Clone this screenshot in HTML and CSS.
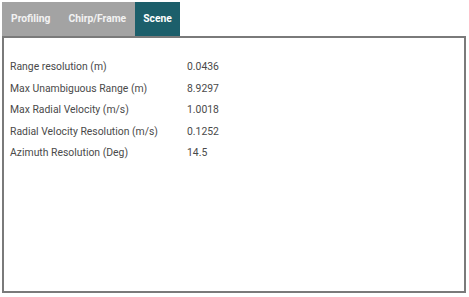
FILE: index.html
```html
<!DOCTYPE html>
<html lang="en">
<head>
    <meta charset="UTF-8">
    <title>Scene</title>
    <link rel="stylesheet" href="styles.css">
</head>
<body>

<div class="tabs">
    <div class="tab">Profiling</div>
    <div class="tab">Chirp/Frame</div>
    <div class="tab active">Scene</div>
</div>

<!-- Scene parameters -->
<div class="panel">
    <div class="row"><span class="label">Range resolution (m)</span><span class="value">0.0436</span></div>
    <div class="row"><span class="label">Max Unambiguous Range (m)</span><span class="value">8.9297</span></div>
    <div class="row"><span class="label">Max Radial Velocity (m/s)</span><span class="value">1.0018</span></div>
    <div class="row"><span class="label">Radial Velocity Resolution (m/s)</span><span class="value">0.1252</span></div>
    <div class="row"><span class="label">Azimuth Resolution (Deg)</span><span class="value">14.5</span></div>
</div>

</body>
</html>
```

FILE: styles.css
```css
body {
    font-family: Roboto, Arial, sans-serif;
    background-color: #fff;
    margin: 0;
    padding: 2px 3px 4px 2px;
}

.tabs {
    display: flex;
    height: 34px;
}

.tab {
    background-color: #a3a3a3;
    color: #f2f2f2;
    font-size: 10.3px;
    font-weight: bold;
    padding: 0 9px;
    line-height: 34px;
}

.tab.active {
    background-color: #1c5f6b;
    color: #fff;
    padding: 0 8px;
}

.panel {
    height: 257px;
    border: 2px solid #7a7a7a;
    padding: 18px 6px 0;
    box-sizing: border-box;
}

.row {
    display: flex;
    font-size: 10.4px;
    color: #4a4a4a;
    height: 21.5px;
    line-height: 21.5px;
}

.label {
    width: 177px;
}
```
